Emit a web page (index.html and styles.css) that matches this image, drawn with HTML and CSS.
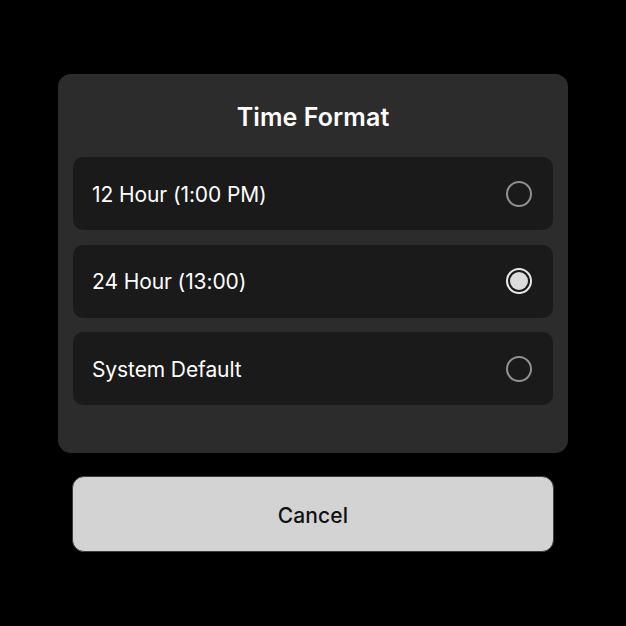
FILE: index.html
```html
<!DOCTYPE html>
<html>
<head>
<meta charset="utf-8">
<link rel="stylesheet" href="styles.css">
</head>
<body>
<div class="screen">
  <div class="sheet">
    <h1 class="title">Time Format</h1>
    <div class="options">
      <div class="option">
        <span class="label">12 Hour (1:00 PM)</span>
        <span class="radio"></span>
      </div>
      <div class="option">
        <span class="label">24 Hour (13:00)</span>
        <span class="radio selected"><span class="dot"></span></span>
      </div>
      <div class="option">
        <span class="label">System Default</span>
        <span class="radio"></span>
      </div>
    </div>
  </div>
  <button class="cancel">Cancel</button>
</div>
</body>
</html>
```
FILE: styles.css
```css
html, body {
  margin: 0;
  padding: 0;
  background: #000;
  width: 626px;
  height: 626px;
  overflow: hidden;
  font-family: Inter, "Liberation Sans", sans-serif;
}
.screen {
  padding: 74px 0 0 58px;
  display: flex;
  flex-direction: column;
  align-items: flex-start;
}
.sheet {
  width: 510px;
  height: 379px;
  box-sizing: border-box;
  background: #2c2c2c;
  border-radius: 13px;
  padding: 24px 15px 0 15px;
}
.title {
  margin: 0 0 23px 0;
  height: 36px;
  line-height: 38px;
  text-align: center;
  color: #fff;
  font-size: 25px;
  font-weight: 600;
  letter-spacing: 0.1px;
}
.options {
  display: flex;
  flex-direction: column;
  gap: 14.5px;
}
.option {
  height: 73px;
  background: #1a1a1a;
  border-radius: 10px;
  display: flex;
  align-items: center;
  justify-content: space-between;
  padding: 0 21px 0 19px;
}
.label {
  color: #fff;
  font-size: 21px;
  font-weight: 400;
  letter-spacing: -0.1px;
  line-height: 26px;
  padding-top: 2px;
}
.radio {
  width: 26px;
  height: 26px;
  box-sizing: border-box;
  border: 2px solid #909090;
  border-radius: 50%;
  display: flex;
  align-items: center;
  justify-content: center;
}
.radio.selected {
  border: 2px solid #e8e8e8;
}
.dot {
  width: 18px;
  height: 18px;
  border-radius: 50%;
  background: #dcdcdc;
}
.cancel {
  margin: 23px 0 0 14px;
  width: 482px;
  height: 76px;
  background: #d3d3d3;
  border: 1px solid #3c3c3c;
  border-radius: 12px;
  color: #111;
  font-family: Inter, "Liberation Sans", sans-serif;
  font-size: 21px;
  font-weight: 500;
  padding: 3px 0 0 0;
  letter-spacing: 0.1px;
}
```
